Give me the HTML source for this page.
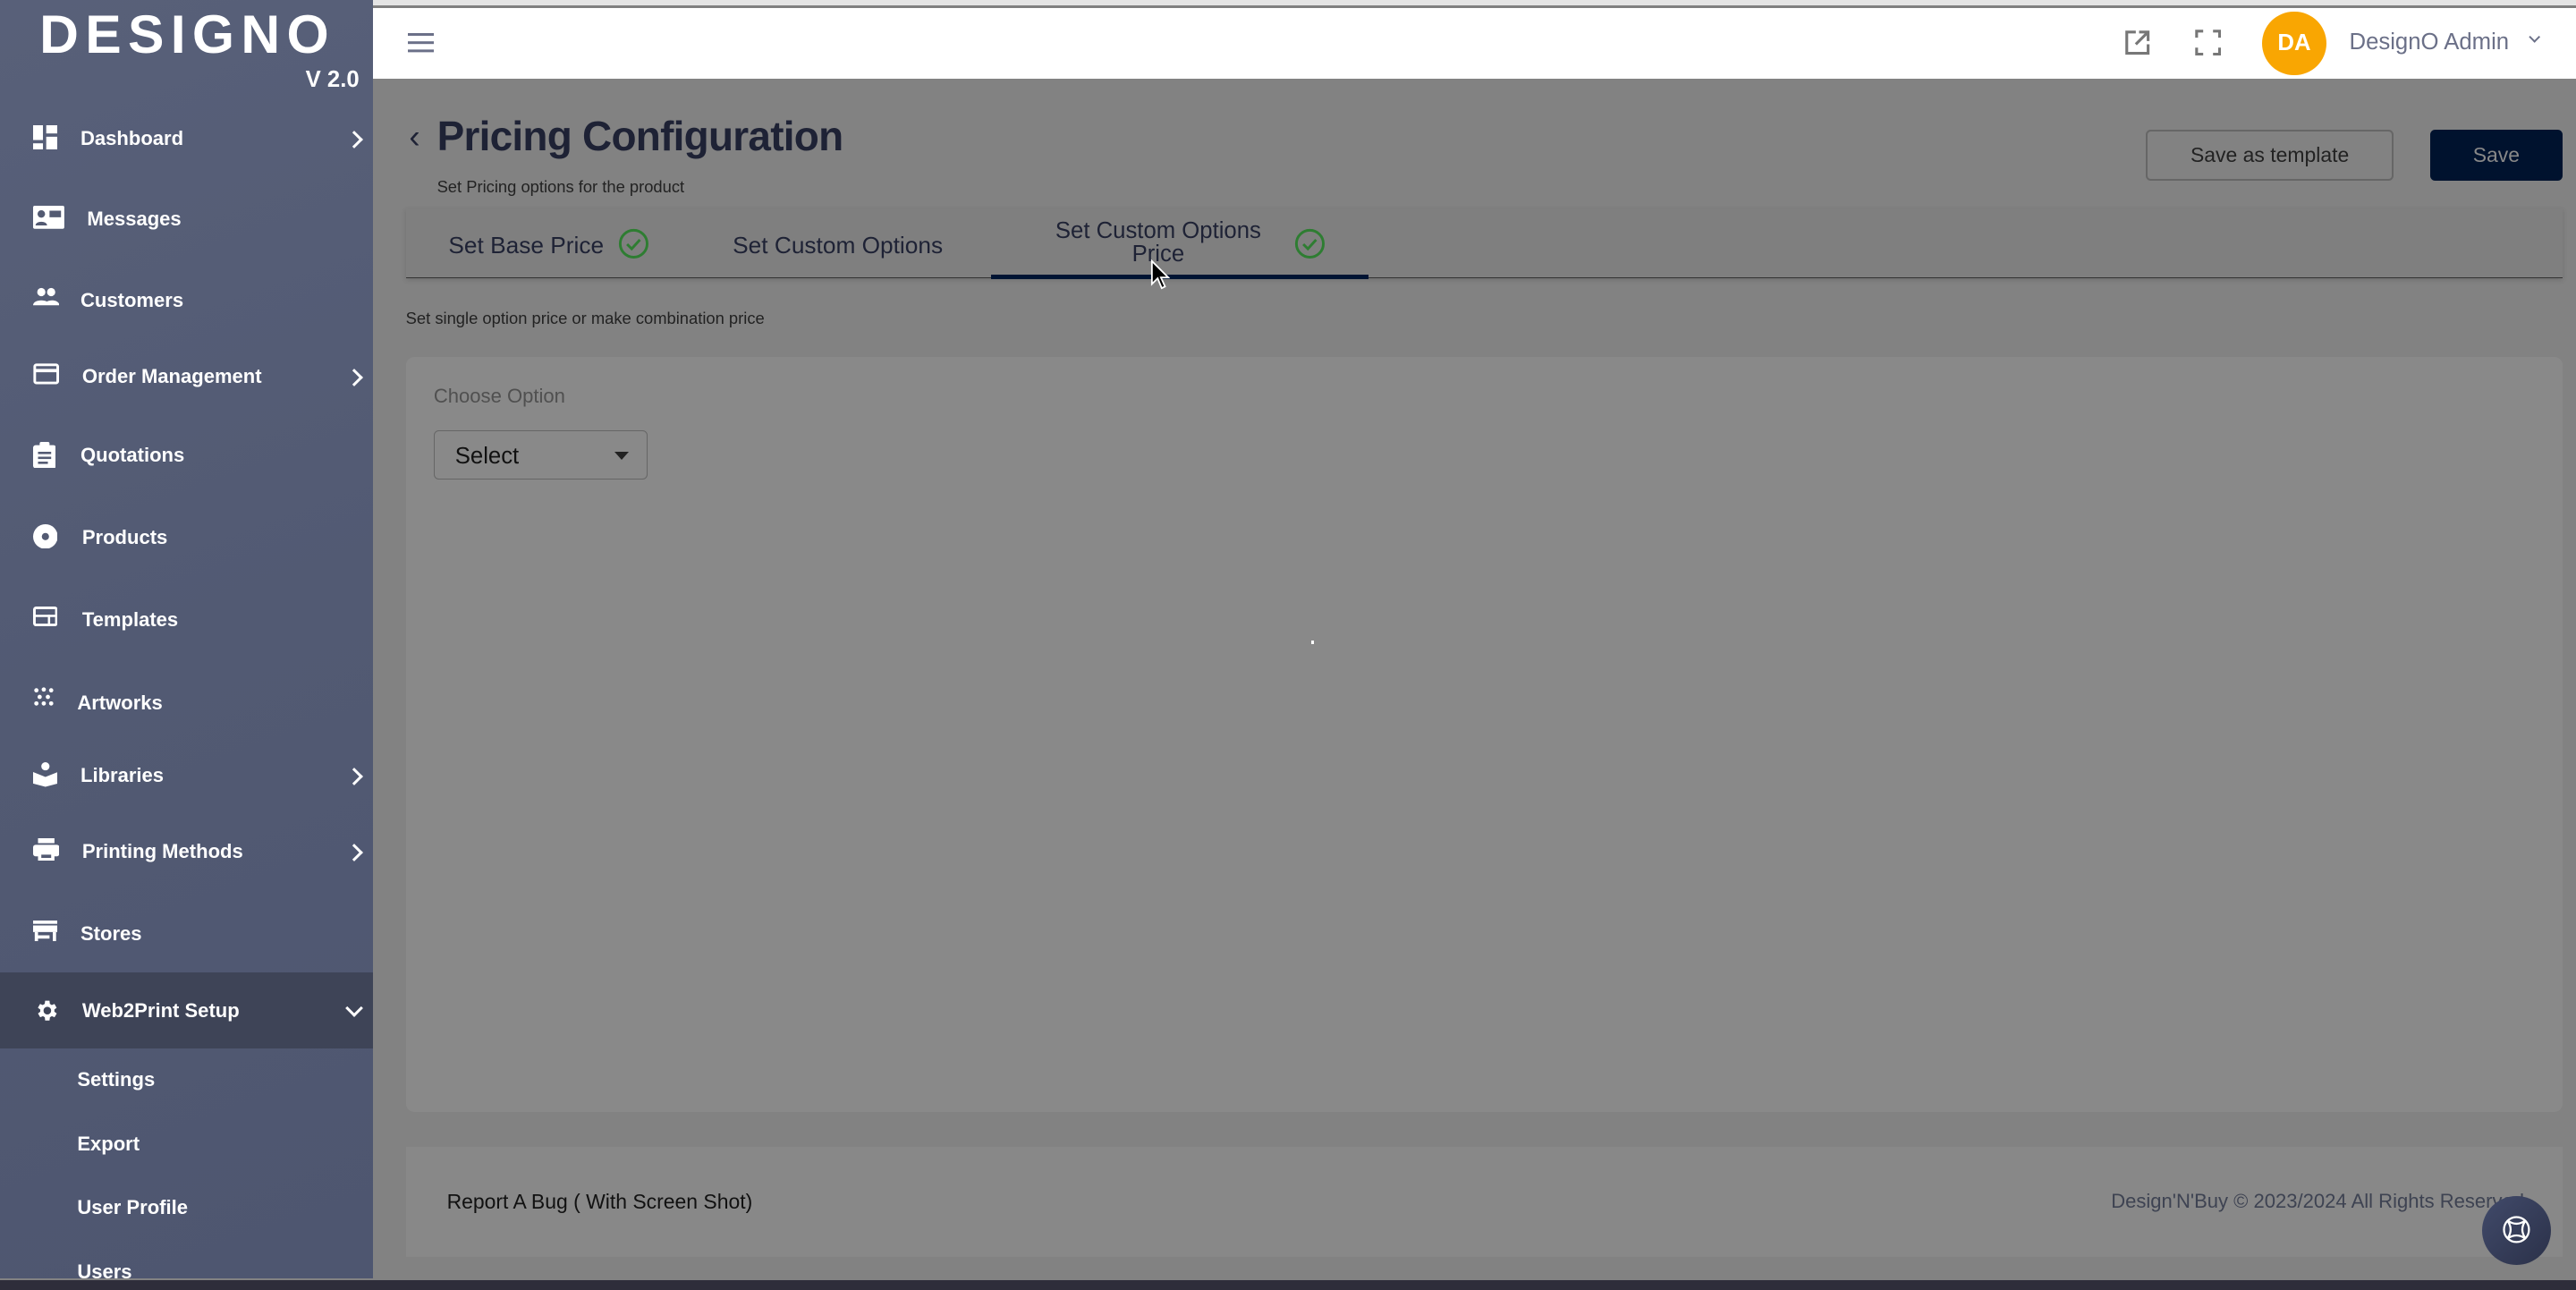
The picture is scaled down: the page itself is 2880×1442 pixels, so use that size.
<!DOCTYPE html>
<html><head><meta charset="utf-8"><style>
html,body{margin:0;padding:0;width:2880px;height:1442px;overflow:hidden;background:#2a2a35}
#w{zoom:1.83673;width:1568px;height:785px;position:relative;background:#828282;font-family:"Liberation Sans",sans-serif;overflow:hidden}
.a{position:absolute}
.sb{left:0;top:0;width:227px;height:778px;background:linear-gradient(160deg,#586079 0%,#525a73 50%,#4e5670 100%)}
.it{position:absolute;left:0;width:227px;color:#fff;font-size:12px;font-weight:bold}
.it span{position:absolute;left:49px;top:0;line-height:16px}
.it svg{position:absolute;left:20px;top:0}
.chev{position:absolute;left:212px;top:2px;width:6px;height:6px;border-right:1.8px solid #fff;border-top:1.8px solid #fff;transform:rotate(45deg)}
.sub{position:absolute;left:47px;color:#fff;font-size:12px;font-weight:bold}
.hd{left:227px;top:5px;width:1341px;height:43px;background:#fff}
</style></head><body><div id="w">
<div class="a" style="left:0;top:0;width:1568px;height:3px;background:#e4e4e4"></div>
<div class="a" style="left:227px;top:3px;width:1341px;height:2px;background:#808080"></div>
<div class="a sb">
 <div class="a" style="left:24px;top:0;color:#fff;font-size:33px;font-weight:bold;letter-spacing:4px;line-height:42px">DESIGNO</div>
 <div class="a" style="left:186px;top:41px;color:#fff;font-size:14px;font-weight:bold">V 2.0</div>
 <div class="it" style="top:76px"><svg width="15" height="15" viewBox="0 0 15 15" fill="#fff"><rect x="0" y="0" width="6" height="9"/><rect x="8" y="0" width="7" height="5"/><rect x="0" y="11" width="6" height="4"/><rect x="8" y="7" width="7" height="8"/></svg><span>Dashboard</span><b class="chev" style="top:5px"></b></div>
 <div class="it" style="top:125px"><svg width="19" height="15" viewBox="0 0 19 15" fill="#fff"><rect x="0" y="0" width="19" height="14" rx="1"/><circle cx="5" cy="5" r="2.3" fill="#535a72"/><path d="M1.5 12c0-3 7-3 7 0z" fill="#535a72"/><rect x="10" y="3" width="7" height="4" fill="#535a72"/></svg><span style="left:53px">Messages</span></div>
 <div class="it" style="top:175px"><svg width="16" height="12" viewBox="0 0 16 12" fill="#fff"><circle cx="5" cy="3" r="2.5"/><circle cx="11" cy="3" r="2.5"/><path d="M0 11c0-4 10-4 10 0zM7 11c0-4 9-4 9 0z"/></svg><span>Customers</span></div>
 <div class="it" style="top:221px"><svg width="16" height="13" viewBox="0 0 16 13"><rect x="1" y="1" width="14" height="11" rx="1" fill="none" stroke="#fff" stroke-width="1.6"/><rect x="1" y="3.5" width="14" height="2" fill="#fff"/></svg><span style="left:50px">Order Management</span><b class="chev" style="top:5px"></b></div>
 <div class="it" style="top:269px"><svg width="14" height="16" viewBox="0 0 14 16" fill="#fff"><rect x="0" y="2" width="14" height="14" rx="1.5"/><rect x="4" y="0" width="6" height="4" rx="1"/><rect x="3" y="6" width="8" height="1.4" fill="#535a72"/><rect x="3" y="9" width="8" height="1.4" fill="#535a72"/><rect x="3" y="12" width="6" height="1.4" fill="#535a72"/></svg><span>Quotations</span></div>
 <div class="it" style="top:319px"><svg width="15" height="15" viewBox="0 0 15 15"><circle cx="7.5" cy="7.5" r="7.5" fill="#fff"/><circle cx="7.5" cy="7.5" r="2.2" fill="#535a72"/></svg><span style="left:50px">Products</span></div>
 <div class="it" style="top:369px"><svg width="15" height="12" viewBox="0 0 15 12"><rect x="0.8" y="0.8" width="13.4" height="10.4" rx="1" fill="none" stroke="#fff" stroke-width="1.6"/><rect x="0" y="5" width="15" height="1.4" fill="#fff"/><rect x="9" y="5" width="1.4" height="6" fill="#fff"/></svg><span style="left:50px">Templates</span></div>
 <div class="it" style="top:418px"><svg width="13" height="12" viewBox="0 0 13 12" fill="#fff"><circle cx="2" cy="2" r="1.3"/><circle cx="6.5" cy="1.5" r="1.3"/><circle cx="11" cy="2" r="1.3"/><circle cx="4" cy="6" r="1.3"/><circle cx="9" cy="6" r="1.3"/><circle cx="2" cy="10" r="1.3"/><circle cx="6.5" cy="10" r="1.3"/><circle cx="11" cy="10" r="1.3"/></svg><span style="left:47px;top:2px">Artworks</span></div>
 <div class="it" style="top:464px"><svg width="15" height="15" viewBox="0 0 15 15" fill="#fff"><circle cx="7.5" cy="2.5" r="2.5"/><path d="M0 6l7.5 3 7.5-3v7l-7.5 2-7.5-2z"/></svg><span>Libraries</span><b class="chev" style="top:5px"></b></div>
 <div class="it" style="top:510px"><svg width="16" height="14" viewBox="0 0 16 14" fill="#fff"><rect x="3" y="0" width="10" height="3"/><rect x="0" y="4" width="16" height="7" rx="1.5"/><rect x="3" y="8" width="10" height="6"/><rect x="5" y="10" width="6" height="2" fill="#535a72"/></svg><span style="left:50px">Printing Methods</span><b class="chev" style="top:5px"></b></div>
 <div class="it" style="top:560px"><svg width="15" height="13" viewBox="0 0 15 13" fill="#fff"><rect x="0" y="0" width="15" height="2"/><rect x="0" y="3" width="15" height="4"/><rect x="1" y="7" width="2" height="6"/><rect x="12" y="7" width="2" height="6"/><rect x="3" y="9" width="7" height="2"/></svg><span>Stores</span></div>
 <div class="a" style="left:0;top:592px;width:227px;height:46px;background:#3e4457"></div>
 <div class="it" style="top:607px"><svg width="16" height="16" viewBox="0 0 24 24" fill="#fff"><path d="M19.4 13a7.5 7.5 0 000-2l2.1-1.6-2-3.5-2.5 1a7 7 0 00-1.7-1L15 3h-4l-.4 2.9a7 7 0 00-1.7 1l-2.5-1-2 3.5L6.6 11a7.5 7.5 0 000 2l-2.1 1.6 2 3.5 2.5-1a7 7 0 001.7 1L11 21h4l.4-2.9a7 7 0 001.7-1l2.5 1 2-3.5zM13 15.5a3.5 3.5 0 110-7 3.5 3.5 0 010 7z"/></svg><span style="left:50px">Web2Print Setup</span><b class="chev" style="top:3px;transform:rotate(135deg)"></b></div>
 <div class="sub" style="top:650px">Settings</div>
 <div class="sub" style="top:689px">Export</div>
 <div class="sub" style="top:728px">User Profile</div>
 <div class="sub" style="top:767px">Users</div>
</div>
<div class="a hd">
 <div class="a" style="left:21px;top:15px;width:16px;height:2px;background:#6b7088;box-shadow:0 5px 0 #6b7088,0 10px 0 #6b7088"></div>
 <svg class="a" style="left:1066px;top:13px" width="16" height="16" viewBox="0 0 16 16" fill="none" stroke="#777" stroke-width="1.7"><path d="M7 1.5H1.5v13h13V9M9 1.5h5.5V7M14.5 1.5L7 9"/></svg>
 <svg class="a" style="left:1109px;top:13px" width="16" height="16" viewBox="0 0 16 16" fill="none" stroke="#777" stroke-width="1.7"><path d="M1 5V1h4M11 1h4v4M15 11v4h-4M5 15H1v-4"/></svg>
 <div class="a" style="left:1150px;top:2px;width:39px;height:39px;border-radius:50%;background:#f9a602;color:#fff;font-weight:bold;font-size:14px;text-align:center;line-height:39px">DA</div>
 <div class="a" style="left:1203px;top:13px;color:#6b7088;font-size:14px">DesignO Admin</div>
 <div class="a" style="left:1313px;top:15px;width:4px;height:4px;border-right:1.3px solid #6b7088;border-bottom:1.3px solid #6b7088;transform:rotate(45deg)"></div>
</div>
<div class="a" style="left:249px;top:72px;color:#1e2235;font-size:20px">‹</div>
<div class="a" style="left:266px;top:68px;color:#1e2235;font-size:25px;font-weight:bold;letter-spacing:-0.4px">Pricing Configuration</div>
<div class="a" style="left:266px;top:108px;color:#222;font-size:10px">Set Pricing options for the product</div>
<div class="a" style="left:1306px;top:79px;width:149px;height:29px;border:1.5px solid #666;border-radius:3px;color:#222;font-size:12.5px;text-align:center;line-height:29px">Save as template</div>
<div class="a" style="left:1479px;top:79px;width:81px;height:31px;background:#00122e;border-radius:3px;color:#888;font-size:12.5px;text-align:center;line-height:31px">Save</div>
<div class="a" style="left:247px;top:127px;width:1313px;height:42px;background:#7f7f7f;border-bottom:1px solid #333;box-shadow:0 1px 3px rgba(0,0,0,.15)"></div>
<div class="a" style="left:273px;top:141px;color:#1e2235;font-size:14.3px">Set Base Price</div>
<svg class="a" style="left:376px;top:139px" width="19" height="19" viewBox="0 0 19 19" fill="none" stroke="#2e7d32" stroke-width="1.6"><circle cx="9.5" cy="9.5" r="8.2"/><path d="M5.5 9.8l2.8 2.8 5-5.5"/></svg>
<div class="a" style="left:446px;top:141px;color:#1e2235;font-size:14.3px">Set Custom Options</div>
<div class="a" style="left:620px;top:134px;width:170px;color:#1e2235;font-size:14px;text-align:center;line-height:14px">Set Custom Options<br>Price</div>
<svg class="a" style="left:788px;top:139px" width="19" height="19" viewBox="0 0 19 19" fill="none" stroke="#2e7d32" stroke-width="1.6"><circle cx="9.5" cy="9.5" r="8.2"/><path d="M5.5 9.8l2.8 2.8 5-5.5"/></svg>
<div class="a" style="left:603px;top:167px;width:230px;height:3px;background:#001433"></div>
<svg class="a" style="left:700px;top:158px" width="12" height="19" viewBox="0 0 12 19"><path d="M1 1v14l3.5-3.5 2.5 6 2-1-2.5-5.5H11z" fill="#000" stroke="#fff" stroke-width="1"/></svg>
<div class="a" style="left:247px;top:188px;color:#222;font-size:10px">Set single option price or make combination price</div>
<div class="a" style="left:247px;top:217px;width:1313px;height:460px;background:#898989;border-radius:5px"></div>
<div class="a" style="left:264px;top:234px;color:#505050;font-size:12px">Choose Option</div>
<div class="a" style="left:264px;top:262px;width:129px;height:29px;border:1px solid #666;border-radius:3px"></div>
<div class="a" style="left:277px;top:270px;color:#111;font-size:14px">Select</div>
<div class="a" style="left:374px;top:275px;width:0;height:0;border-left:4.5px solid transparent;border-right:4.5px solid transparent;border-top:5px solid #222"></div>
<div class="a" style="left:798px;top:390px;width:2px;height:2px;background:#fff"></div>
<div class="a" style="left:247px;top:698px;width:1313px;height:67px;background:#888"></div>
<div class="a" style="left:272px;top:724px;color:#111;font-size:12.5px">Report A Bug ( With Screen Shot)</div>
<div class="a" style="left:1285px;top:724px;color:#3e4352;font-size:12px">Design'N'Buy © 2023/2024 All Rights Reserved</div>
<div class="a" style="left:1511px;top:728px;width:42px;height:42px;border-radius:50%;background:linear-gradient(135deg,#414a6a,#2b3149)"></div>
<svg class="a" style="left:1522px;top:739px" width="19" height="19" viewBox="0 0 20 20" fill="none" stroke="#fff" stroke-width="1.3"><circle cx="10" cy="10" r="8"/><path d="M4 4c4 3 8 3 12 0M4 16c4-3 8-3 12 0M4 4c3 4 3 8 0 12M16 4c-3 4-3 8 0 12"/></svg>
<div class="a" style="left:0;top:779px;width:1568px;height:6px;background:#2e2d3a"></div>
</div></body></html>
